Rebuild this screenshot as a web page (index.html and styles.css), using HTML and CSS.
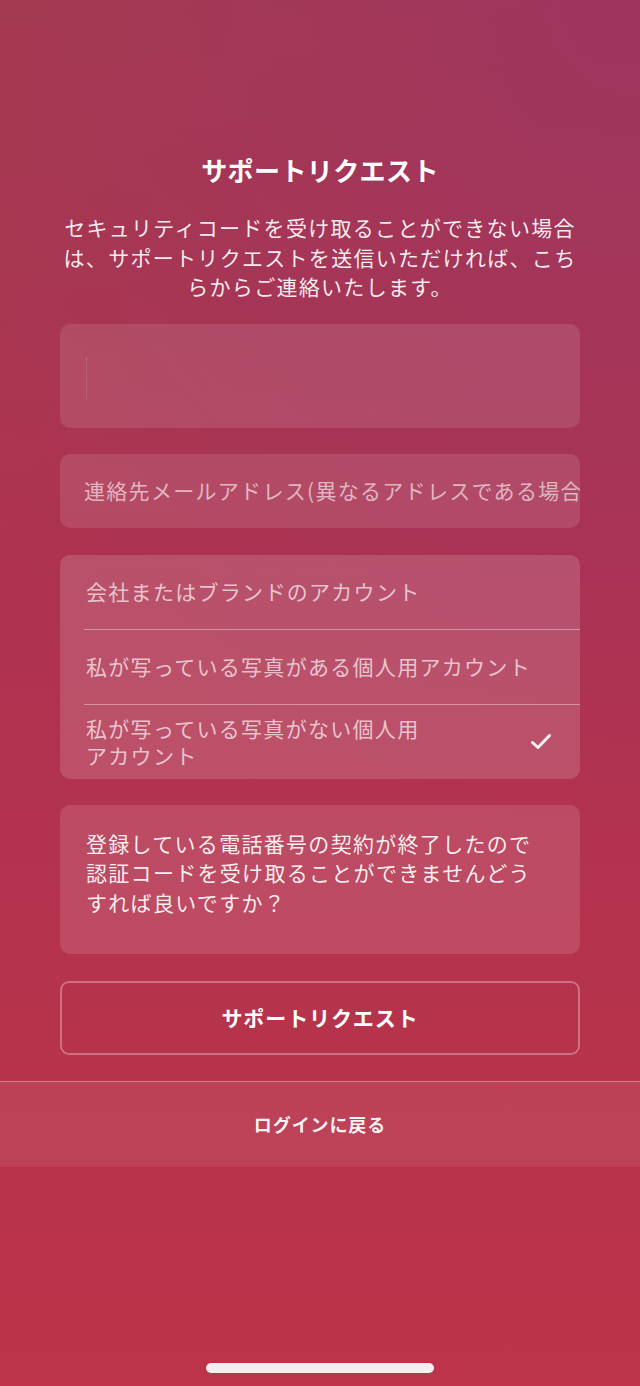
FILE: index.html
```html
<!DOCTYPE html>
<html lang="ja">
<head>
<meta charset="utf-8">
<title>サポートリクエスト</title>
<link rel="stylesheet" href="styles.css">
</head>
<body>
<div class="screen">
  <div class="content">
    <h1 class="title">サポートリクエスト</h1>
    <p class="desc">セキュリティコードを受け取ることができない場合は、サポートリクエストを送信いただければ、こちらからご連絡いたします。</p>

    <div class="field field-name"><span class="caret"></span></div>
    <div class="field field-mail"><span class="placeholder">連絡先メールアドレス(異なるアドレスである場合</span></div>

    <div class="options">
      <div class="option"><span class="label">会社またはブランドのアカウント</span></div>
      <div class="option"><span class="label">私が写っている写真がある個人用アカウント</span></div>
      <div class="option selected">
        <span class="label narrow">私が写っている写真がない個人用アカウント</span>
        <svg class="check" width="22" height="18" viewBox="0 0 22 18"><path d="M2.5 9.5 L8 14.5 L19.5 2.5" fill="none" stroke="#fff" stroke-width="3" stroke-linecap="round" stroke-linejoin="round"/></svg>
      </div>
    </div>

    <div class="field message">登録している電話番号の契約が終了したので認証コードを受け取ることができませんどうすれば良いですか？</div>

    <button class="submit">サポートリクエスト</button>
  </div>

  <div class="back">ログインに戻る</div>

  <div class="home-bar"></div>
</div>
</body>
</html>
```

FILE: styles.css
```css
html, body {
    margin: 0;
    padding: 0;
}
body {
    width: 640px;
    height: 1386px;
    overflow: hidden;
    font-family: "Noto Sans CJK JP", "Noto Sans", sans-serif;
    color: #fff;
    background:
        radial-gradient(circle at 100% 0%, rgba(158, 52, 98, 0.85) 0%, rgba(158, 52, 98, 0) 55%),
        linear-gradient(to bottom, #a63b4d 0%, #af3250 45%, #bd3449 100%);
}
.screen {
    height: 1386px;
    display: flex;
    flex-direction: column;
}
.content {
    padding: 152px 60px 0 60px;
}
.title {
    margin: 0;
    font-size: 26px;
    line-height: 36px;
    font-weight: bold;
    letter-spacing: 0.4px;
    text-align: center;
}
.desc {
    margin: 25px 0 0 0;
    font-size: 21px;
    line-height: 29.5px;
    letter-spacing: 1.3px;
    text-align: center;
    color: rgba(255, 255, 255, 0.92);
}
.field {
    background-color: rgba(255, 255, 255, 0.11);
    border-radius: 10px;
    font-size: 21px;
    letter-spacing: 1.3px;
}
.field-name {
    margin-top: 22px;
    height: 104px;
    position: relative;
}
.caret {
    position: absolute;
    left: 26px;
    top: 34px;
    height: 42px;
    border-left: 1px dotted rgba(255, 255, 255, 0.22);
}
.field-mail {
    margin-top: 26px;
    height: 74px;
    display: flex;
    align-items: center;
    padding-left: 24px;
    overflow: hidden;
    white-space: nowrap;
}
.placeholder {
    color: rgba(255, 255, 255, 0.6);
    line-height: 29px;
}
.options {
    margin-top: 27px;
    background-color: rgba(255, 255, 255, 0.15);
    border-radius: 10px;
    font-size: 21px;
    letter-spacing: 1.3px;
    color: rgba(255, 255, 255, 0.68);
}
.option {
    margin-left: 24px;
    padding-right: 28px;
    height: 74px;
    display: flex;
    align-items: center;
    justify-content: space-between;
    line-height: 27px;
}
.label {
    padding-left: 2px;
}
.option + .option {
    border-top: 1px solid rgba(255, 255, 255, 0.38);
}
.label.narrow {
    max-width: 350px;
}
.check {
    opacity: 0.92;
}
.message {
    margin-top: 26px;
    height: 149px;
    box-sizing: border-box;
    padding: 24px 48px 0 26px;
    line-height: 29.5px;
    color: rgba(255, 255, 255, 0.92);
    background-color: rgba(255, 255, 255, 0.12);
}
.submit {
    display: block;
    width: 100%;
    margin-top: 27px;
    height: 74px;
    padding: 0 0 2px 0;
    background: transparent;
    border: 2px solid rgba(255, 255, 255, 0.3);
    border-radius: 9px;
    color: #fff;
    font-family: inherit;
    font-size: 21px;
    font-weight: bold;
    letter-spacing: 0.9px;
}
.back {
    margin-top: 26px;
    height: 86px;
    box-sizing: border-box;
    border-top: 1px solid rgba(255, 255, 255, 0.32);
    background-color: rgba(255, 255, 255, 0.07);
    display: flex;
    align-items: center;
    justify-content: center;
    font-size: 18px;
    font-weight: bold;
    letter-spacing: 0.9px;
    color: rgba(255, 255, 255, 0.95);
}
.home-bar {
    margin: auto auto 13px auto;
    width: 228px;
    height: 10px;
    border-radius: 5px;
    background-color: #f4eef0;
}
```
